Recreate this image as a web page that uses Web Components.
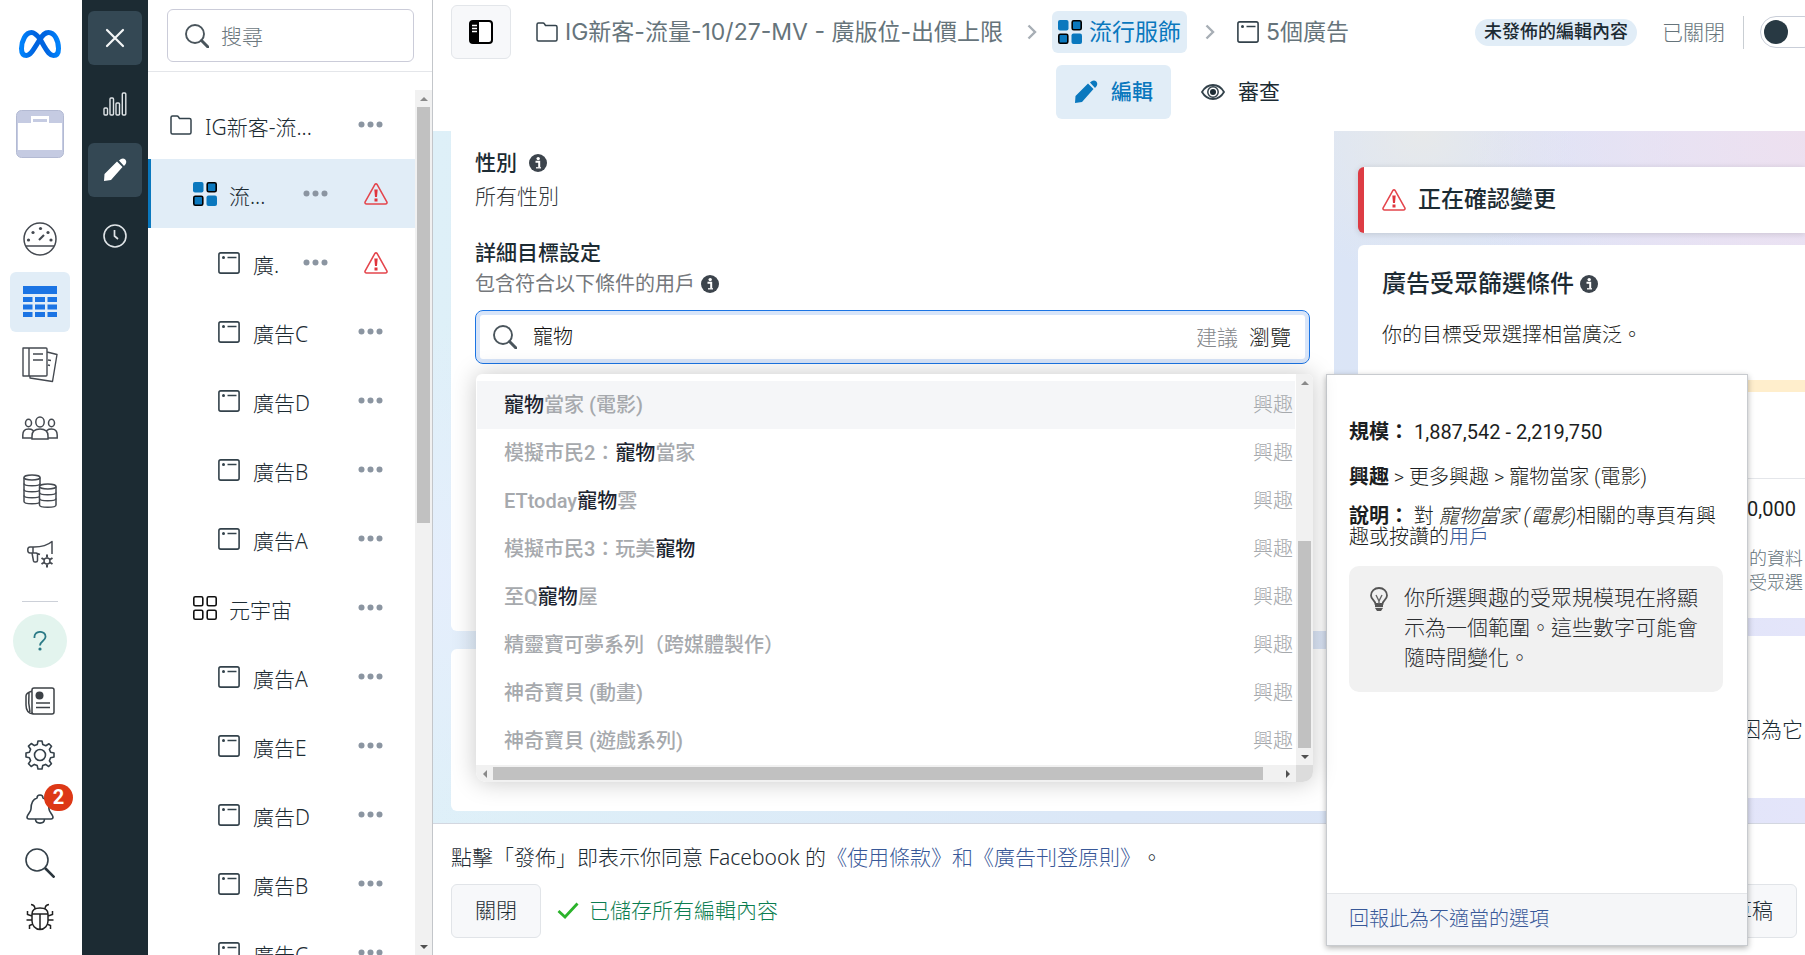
<!DOCTYPE html>
<html lang="zh-Hant">
<head>
<meta charset="utf-8">
<meta name="viewport" content="width=device-width, initial-scale=1">
<title>廣告管理員</title>
<style>
html, body { margin: 0; height: 100%; }
body {
  --ink: #1c2b33; --muted: #67747a; --blue: #0a78be; --tint: #e1edf7; --link: #385898; --red: #dd3c44; --line: #dfe1e5;
  --roboto: Roboto, "Noto Sans CJK TC", sans-serif;
  --segoe: "Noto Sans", "Noto Sans CJK TC", sans-serif;
  font: 300 20px/30px var(--segoe); color: var(--ink); background: #fff; overflow: hidden;
  text-spacing-trim: space-all;
}
</style>
</head>
<body>
<ads-editor></ads-editor>
<script>
const BASE = `*{box-sizing:border-box}:host([hidden]){display:none}
button{font:inherit;color:inherit;border:0;background:none;padding:0;margin:0;display:flex;align-items:center;justify-content:center;cursor:pointer}
a{color:var(--link);text-decoration:none}input{font:inherit;color:inherit;border:0;outline:0;background:none;padding:0;min-width:0}p,h2,h3,ul{margin:0;padding:0;font:inherit;list-style:none}`;

function define(name, css, html) {
  customElements.define(name, class extends HTMLElement {
    constructor() {
      super();
      this.attachShadow({ mode: 'open' });
    }
    connectedCallback() {
      const body = typeof html === 'function' ? html(this) : html;
      this.shadowRoot.innerHTML = `<style>${BASE}${css}</style>${body}`;
    }
  });
}

/* name: [width, height, markup] */
const ICONS = {
  logo: [42, 28, `<defs><linearGradient id="m" x1="0" x2="1"><stop offset="0" stop-color="#0082fb"/><stop offset=".35" stop-color="#0064e0"/><stop offset=".65" stop-color="#0064e0"/><stop offset="1" stop-color="#0082fb"/></linearGradient></defs><path d="M21 9C18 5 15.500 2.500 12.500 2.500 6.500 2.500 2.500 11 2.500 18.500c0 4.500 1.800 7 5 7 3.500 0 6-4 13-15.500C24 4.500 26 2.500 29.500 2.500c6 0 10 8 10 16 0 4.500-1.800 7-5 7-3.500 0-6-3.500-9.500-9.500z" fill="none" stroke="url(#m)" stroke-width="5"/>`],
  account: [48, 48, `<rect x=".5" y=".5" width="47" height="47" rx="5" fill="#c5cbe2" stroke="#b3bad3"/><path d="M2 13h13V6h18v7h13v27H2z" fill="#fff"/><path d="M17 9h14v3H17z" fill="#c5cbe2"/>`],
  gauge: [34, 34, `<g fill="none" stroke="#444950" stroke-width="1.500"><circle cx="17" cy="17" r="16"/><path d="M3 24h28"/><path d="M16 18l5-5" stroke-width="2.200"/></g><g fill="#444950"><circle cx="5.500" cy="18" r="1.600"/><circle cx="10" cy="10.500" r="1.600"/><circle cx="17.500" cy="6.500" r="1.600"/><circle cx="25" cy="10.500" r="1.600"/><circle cx="28" cy="18" r="1.600"/></g>`],
  grid: [34, 32, `<path fill="#1b74e4" d="M0 0h34v8H0zM0 11h9.500v5H0zM12 11h10v5H12zM24.500 11H34v5h-9.500zM0 18.500h9.500v5H0zM12 18.500h10v5H12zM24.500 18.500H34v5h-9.500zM0 26h9.500v5H0zM12 26h10v5H12zM24.500 26H34v5h-9.500z"/>`],
  books: [36, 36, `<g fill="none" stroke="#444950" stroke-width="1.400" stroke-linejoin="round"><path d="M1 1h23q1 0 1 1v26q0 1-1 1H1zM7 1v28M11 7h10M11 13h10M25 5l10 2.500-4.500 27L8 31v-2M26 13l3 .5M26 18l2 .5"/></g>`],
  people: [36, 24, `<g fill="#fff" stroke="#444950" stroke-width="1.500"><ellipse cx="6.500" cy="7" rx="3" ry="3.700"/><ellipse cx="29.500" cy="7" rx="3" ry="3.700"/><path d="M.8 22v-3q0-6 5.700-6t5.700 5v4zM35.200 22v-3q0-6-5.700-6t-5.700 5v4z"/><ellipse cx="18" cy="6" rx="4.200" ry="5"/><path d="M10 23v-3q0-7 8-7t8 7v3z"/></g>`],
  coins: [34, 34, `<g fill="#fff" stroke="#444950" stroke-width="1.500"><path d="M1 3.500v24c0 3 16 3 16 0v-24"/><ellipse cx="9" cy="3.500" rx="8" ry="2.500"/><path fill="none" d="M1 9.500c0 3 16 3 16 0M1 15.500c0 3 16 3 16 0M1 21.500c0 3 16 3 16 0"/><path d="M16.500 12.500V31c0 3 16.500 3 16.500 0V12.500"/><ellipse cx="24.800" cy="12.500" rx="8.200" ry="2.500"/><path fill="none" d="M16.500 18.500c0 3 16.500 3 16.500 0M16.500 24.500c0 3 16.500 3 16.500 0"/></g>`],
  megaphone: [28, 28, `<g fill="none" stroke="#444950" stroke-width="1.500" stroke-linejoin="round"><path d="M14 14.500L10 13H4C1 13 1 7 4 7h4C16 7 22 5 26 1.500V14M7 7v6M6 13l1.500 8c.5 1.500 4 1.500 4-.5V14"/><circle cx="21" cy="21" r="3"/><path d="M21 14.500v3M21 24.500v3M15.500 18l2.500 1.500M24 22.500l2.500 1.500M26.500 18L24 19.500M18 22.500L15.500 24" stroke-width="2"/></g>`],
  help: [14, 20, `<path d="M1.500 7C.5-1 13-1 12.500 6 12.300 10 7 10 7 14.500" fill="none" stroke="#2b7a86" stroke-width="1.800"/><circle cx="7" cy="18" r="1.600" fill="#2b7a86"/>`],
  news: [30, 28, `<g fill="none" stroke="#3c4146" stroke-width="1.500"><path d="M7 3Q7 1 9 1h18q2 0 2 2v22q0 2-2 2H8Q1 26 1 18V9q0-3 6-5zM7 3v22q0 2 2 2M4 6q-1 10 1 19M11 16h14M11 20.500h14"/></g><circle cx="14.500" cy="8.500" r="4" fill="#3c4146"/>`],
  gear: [30, 30, `<g fill="none" stroke="#344049" stroke-width="1.600" stroke-linejoin="round"><path d="M13 1h4l.8 3.600 3 1.200L24 3.800 26.500 6.300 24.400 9.400l1.200 2.900L29 13v4l-3.400.8-1.200 2.900 2 3.100L23.700 26.500l-3.100-2.100-2.900 1.200L17 29h-4l-.8-3.400-2.900-1.200-3.100 2.100L3.500 23.700l2.100-3.100-1.200-2.900L1 17v-4l3.400-.8 1.200-2.900-2.100-3.100L6.300 3.500l3.100 2.100 2.900-1.200z"/><circle cx="15" cy="15" r="5.500"/></g>`],
  bell: [28, 30, `<g fill="none" stroke="#344049" stroke-width="1.600" stroke-linejoin="round"><path d="M11 4c0-4 6-4 6 0 5 1.500 6 6 6 11 0 3 4 6 4 8 0 1-.5 2-2 2H3c-1.500 0-2-1-2-2 0-2 4-5 4-8 0-5 1-9.500 6-11zM9.500 25c0 5.500 9 5.500 9 0"/></g>`],
  find: [30, 30, `<circle cx="12" cy="12" r="11" fill="none" stroke="#344049" stroke-width="1.600"/><path d="M20 20l9.500 9.500" stroke="#2a353d" stroke-width="2.600"/>`],
  bug: [28, 28, `<g fill="none" stroke="#222" stroke-width="1.500"><path d="M6 11q0-6 8-6t8 6v7c0 4-3 8.500-8 8.500S6 22 6 18zM6 11h16M14 11v15M9 6Q9 2 5 1.500M19 6q0-4 4-4.500M6 13L1.500 11.500 1.500 8M22 13l4.500-1.500V8M6 17H.5M22 17h5.500M7 21l-3.500 1.500V26M21 21l3.500 1.500V26"/></g>`],
  close: [20, 20, `<path d="M2 2l16 16M18 2L2 18" stroke="#f4f6f7" stroke-width="2.200" stroke-linecap="round"/>`],
  chart: [24, 24, `<g fill="none" stroke="#dfe4e7" stroke-width="1.400"><rect x="1" y="16" width="3.500" height="7" rx="1"/><rect x="7" y="6" width="3.500" height="17" rx="1"/><rect x="13" y="11" width="3.500" height="12" rx="1"/><rect x="19.300" y="1" width="3.500" height="22" rx="1"/></g>`],
  pencil: [24, 24, `<path d="M1 23l.5-7L14 3.500l5.500 5.500L8 22zM16 2.500Q19.500-.8 22.300 1.500 24.800 4.500 21 8z" fill="currentColor"/>`],
  clock: [24, 24, `<circle cx="12" cy="12" r="11" fill="none" stroke="#dfe4e7" stroke-width="1.600"/><path d="M11.500 6v6l3.500 3" fill="none" stroke="#dfe4e7" stroke-width="1.700"/>`],
  glass: [24, 24, `<circle cx="10" cy="10" r="9" fill="none" stroke="#4a555c" stroke-width="1.900"/><path d="M16.500 16.500L23 23" stroke="#4a555c" stroke-width="3" stroke-linecap="round"/>`],
  folder: [22, 20, `<path d="M1 17.500v-15Q1 1 2.500 1H7q1 0 1.500 1l1 1.500H19.500Q21 3.500 21 5v12.500Q21 19 19.500 19h-17Q1 19 1 17.500z" fill="none" stroke="#33424b" stroke-width="1.500"/>`],
  sets: [24, 24, `<rect width="10.500" height="10.500" rx="2" fill="#0a78be"/><rect x="14.200" y=".8" width="9" height="9" rx="1.500" fill="#0a78be" stroke="#000" stroke-width="1.600"/><rect x=".8" y="14.200" width="9" height="9" rx="1.500" fill="#0a78be" stroke="#000" stroke-width="1.600"/><rect x="13.500" y="13.500" width="10.500" height="10.500" rx="2" fill="#0a78be"/>`],
  setsoff: [24, 24, `<g fill="none" stroke="#111" stroke-width="1.600"><rect x=".8" y=".8" width="9" height="9" rx="1.500"/><rect x="14.200" y=".8" width="9" height="9" rx="1.500"/><rect x=".8" y="14.200" width="9" height="9" rx="1.500"/><rect x="14.200" y="14.200" width="9" height="9" rx="1.500"/></g>`],
  ad: [22, 22, `<rect x=".9" y=".9" width="20.200" height="20.200" rx="1.800" fill="none" stroke="#33424b" stroke-width="1.600"/><circle cx="5.500" cy="5.500" r="1.500" fill="#33424b"/><path d="M9.500 5.500h9" stroke="#33424b" stroke-width="1.500"/>`],
  dots: [25, 7, `<g fill="#8b95a1"><circle cx="3.500" cy="3.500" r="3"/><circle cx="12.500" cy="3.500" r="3"/><circle cx="21.500" cy="3.500" r="3"/></g>`],
  warn: [24, 22, `<path d="M10.800 1.600Q12 .2 13.200 1.600L23 19.200Q23.200 21 21.500 21h-19Q.8 21 1 19.200z" fill="none" stroke="#e4454c" stroke-width="1.600"/><path d="M10.300 6.500h3.400l-.7 7.500h-2zM10.500 15.500h3v3h-3z" fill="#e0353d"/>`],
  panel: [24, 24, `<rect x="1" y="1" width="22" height="22" rx="3" fill="#fff" stroke="#000" stroke-width="2"/><path d="M2 1h8v22H2z" fill="#000"/><path d="M3 5.500h5M3 8.500h5M3 11.500h5" stroke="#fff" stroke-width="1.300"/>`],
  chevron: [10, 16, `<path d="M1.500 1.500L8 8l-6.500 6.500" fill="none" stroke="#a7aeb5" stroke-width="2.400"/>`],
  eye: [24, 16, `<path d="M1 8Q5 1 12 1t11 7q-4 7-11 7T1 8z" fill="none" stroke="#33424b" stroke-width="1.800"/><circle cx="12" cy="8" r="5.200" fill="none" stroke="#33424b" stroke-width="1.500"/><circle cx="12" cy="8" r="3" fill="#1c2b33"/>`],
  info: [18, 18, `<circle cx="9" cy="9" r="9" fill="#3c444c"/><circle cx="9.200" cy="4.600" r="1.700" fill="#fff"/><path d="M6.500 7.800h3.700V13.500" fill="none" stroke="#fff" stroke-width="2"/><path d="M7 13.800h5" stroke="#fff" stroke-width="1.300"/>`],
  check: [22, 17, `<path d="M1.500 9l6.500 6L20.500 1.500" fill="none" stroke="#2bb32b" stroke-width="2.800"/>`],
  bulb: [18, 24, `<path d="M5.500 17C5 13 1 12.500 1 8.500 1 4 4.500 1 9 1s8 3 8 7.500c0 4-4 4.500-4.500 8.500z" fill="none" stroke="#555" stroke-width="1.800"/><path d="M6 8l3 6 3-6M9 14v3" fill="none" stroke="#666" stroke-width="1.400"/><path d="M5 18h8v3l-2 3H7l-2-3z" fill="#555"/><path d="M5 20.500h8" stroke="#ddd" stroke-width="1"/>`],
};
define('ui-icon', ':host{display:inline-flex;flex:none}svg{display:block}', el => {
  const [w, h, body] = ICONS[el.getAttribute('name')];
  return `<svg width="${w}" height="${h}" viewBox="0 0 ${w} ${h}" aria-hidden="true">${body}</svg>`;
});

/* Scroll track with arrow ends; start and size are percentages of the track. */
define('scroll-track', `
:host{display:flex;flex-direction:column;width:17px;background:#f1f1f1}
:host([row]){flex-direction:row;width:auto;height:17px}
i{flex:none;width:17px;height:17px;display:flex;align-items:center;justify-content:center}
i::before{content:"";border:4px solid transparent}
.a::before{border-top:0;border-bottom:4px solid #8a8a8a}.b::before{border-bottom:0;border-top:4px solid #505050}
:host([row]) .a::before{border:4px solid transparent;border-left:0;border-right:4px solid #8a8a8a}
:host([row]) .b::before{border:4px solid transparent;border-right:0;border-left:4px solid #505050}
.t{flex:1;display:flex;flex-direction:inherit}
.t b{background:#c1c1c1;margin:0 2px}:host([row]) .t b{margin:2px 0}`, el => {
  const s = +el.getAttribute('start'), z = +el.getAttribute('size');
  return `<i class="a"></i><div class="t"><span style="flex:${s}"></span><b style="flex:${z}"></b><span style="flex:${100 - s - z}"></span></div><i class="b"></i>`;
});

define('global-nav', `
:host{display:flex;flex-direction:column;align-items:center;width:82px;padding:20px 2px 0 0;flex:none}
nav{display:contents}
button{flex:none}
.logo{width:60px;height:48px}.account{margin:42px 0 51px;height:48px}
.main{display:grid;gap:3px}.main button{width:60px;height:60px;border-radius:6px}.main .on{background:var(--tint)}
hr{width:36px;height:1px;border:0;background:#ccd0d8;margin:17px 0 12px}
.help{width:54px;height:54px;border-radius:50%;background:#e3f4ee;margin-bottom:6px}
.tools button{width:60px;height:54px;position:relative}
.badge{position:absolute;left:34px;top:2px;width:29px;height:27px;border-radius:14px;background:#dd3816;color:#fff;font:700 20px/26px var(--roboto)}`, `
<nav aria-label="主選單">
<button class="logo" aria-label="Meta"><ui-icon name="logo"></ui-icon></button>
<button class="account" aria-label="帳號"><ui-icon name="account"></ui-icon></button>
<div class="main">
<button aria-label="總覽"><ui-icon name="gauge"></ui-icon></button>
<button class="on" aria-label="廣告活動"><ui-icon name="grid"></ui-icon></button>
<button aria-label="報告"><ui-icon name="books"></ui-icon></button>
<button aria-label="受眾"><ui-icon name="people"></ui-icon></button>
<button aria-label="帳單"><ui-icon name="coins"></ui-icon></button>
<button aria-label="設定廣告"><ui-icon name="megaphone"></ui-icon></button>
</div>
<hr>
<button class="help" aria-label="說明"><ui-icon name="help"></ui-icon></button>
<div class="tools">
<button aria-label="消息"><ui-icon name="news"></ui-icon></button>
<button aria-label="設定"><ui-icon name="gear"></ui-icon></button>
<button aria-label="通知"><ui-icon name="bell"></ui-icon><span class="badge">2</span></button>
<button aria-label="搜尋"><ui-icon name="find"></ui-icon></button>
<button aria-label="回報錯誤"><ui-icon name="bug"></ui-icon></button>
</div>
</nav>`);

define('mode-rail', `
:host{display:flex;flex-direction:column;align-items:center;gap:12px;width:66px;flex:none;background:#1c2b33;padding-top:11px;color:#fff}
button{width:54px;height:54px;border-radius:6px}.on{background:#344854}`, `
<button class="on" aria-label="關閉"><ui-icon name="close"></ui-icon></button>
<button aria-label="圖表"><ui-icon name="chart"></ui-icon></button>
<button class="on" aria-label="編輯"><ui-icon name="pencil"></ui-icon></button>
<button aria-label="紀錄"><ui-icon name="clock"></ui-icon></button>`);

define('tree-row', `
:host{display:flex;align-items:center;height:69px;padding:0 32px 0 22px;flex:none;font-size:21px}
:host([level="1"]){padding-left:45px}:host([level="2"]){padding-left:70px}
:host([warn]){padding-right:27px}
:host([on]){background:var(--tint);box-shadow:inset 3px 0 var(--blue)}
.name{flex:1;margin-left:13px;padding-top:4px;white-space:nowrap}
:host([level="1"]) .name{margin-left:12px}
.warn{margin-left:36px}`, el => `
<ui-icon name="${el.getAttribute('icon')}"></ui-icon><span class="name"><slot></slot></span>
<button aria-label="更多"><ui-icon name="dots"></ui-icon></button>${el.hasAttribute('warn') ? '<ui-icon class="warn" name="warn"></ui-icon>' : ''}`);

define('campaign-tree', `
:host{display:flex;flex-direction:column;width:285px;flex:none;border-right:1px solid #c3c6ca;min-height:0}
.top{padding:9px 18px 9px 19px;border-bottom:1px solid #e4e6ea;margin-bottom:18px}
.top label{display:flex;align-items:center;gap:12px;height:53px;border:1px solid #cbccd9;border-radius:6px;padding:0 17px;font-size:21px}
input{flex:1}input::placeholder{color:#6d787e;opacity:1}
.body{flex:1;display:flex;min-height:0;overflow:hidden}
.rows{flex:1;display:flex;flex-direction:column;min-width:0}`, `
<div class="top"><label><ui-icon name="glass"></ui-icon><input type="search" placeholder="搜尋" aria-label="搜尋"></label></div>
<div class="body"><div class="rows">
<tree-row level="0" icon="folder">IG新客-流...</tree-row>
<tree-row level="1" icon="sets" on warn>流...</tree-row>
<tree-row level="2" icon="ad" warn>廣.</tree-row>
<tree-row level="2" icon="ad">廣告C</tree-row>
<tree-row level="2" icon="ad">廣告D</tree-row>
<tree-row level="2" icon="ad">廣告B</tree-row>
<tree-row level="2" icon="ad">廣告A</tree-row>
<tree-row level="1" icon="setsoff">元宇宙</tree-row>
<tree-row level="2" icon="ad">廣告A</tree-row>
<tree-row level="2" icon="ad">廣告E</tree-row>
<tree-row level="2" icon="ad">廣告D</tree-row>
<tree-row level="2" icon="ad">廣告B</tree-row>
<tree-row level="2" icon="ad">廣告C</tree-row>
</div><scroll-track start="0" size="50"></scroll-track></div>`);

define('editor-header', `
:host{display:block;height:131px;padding:5px 0 0 18px;flex:none;font:400 23px/34px Inter,"Noto Sans CJK TC",sans-serif;color:#66747b;overflow:hidden;white-space:nowrap}
.crumbs{display:flex;align-items:center;height:54px}
.side{width:60px;height:54px;border:1px solid #e3e6ea;border-radius:6px;background:#f7f8fa;margin-right:25px;flex:none}
.crumbs a{display:flex;align-items:center;gap:7px;color:inherit;flex:none}
.sep{margin:0 15px 0 24px}
.crumbs .chip{background:var(--tint);border-radius:6px;height:42px;padding:0 6px;color:var(--blue)}
.chip + .sep{margin:0 22px 0 18px}
.space{flex:1}
.pill{background:var(--tint);border-radius:14px;height:27px;padding:0 9px;font:500 18px/26px var(--roboto);color:var(--ink);margin-right:25px;flex:none}
.state{font-size:21px;font-weight:300;padding-right:18px;border-right:1px solid #c9ced3;line-height:33px;flex:none}
.switch{position:relative;width:45px;height:32px;margin-left:16px;flex:none}
.switch input{appearance:none;display:flex;align-items:center;width:60px;height:32px;margin:0;padding:0 3px;border:1px solid #c9ced8;border-radius:16px}
.switch input::before{content:"";width:24px;height:24px;border-radius:50%;background:#283943}
.tabs{display:flex;justify-content:center;gap:12px;margin:6px 0 0 98px;font-size:21px}
.tabs button{height:54px;border-radius:6px;padding:0 18px;gap:13px;color:var(--ink)}
.tabs .on{background:var(--tint);color:var(--blue);font-weight:500}`, `
<div class="crumbs">
<button class="side" aria-label="側邊欄"><ui-icon name="panel"></ui-icon></button>
<a href="#campaign"><ui-icon name="folder"></ui-icon><span>IG新客-流量-10/27-MV - 廣版位-出價上限</span></a>
<ui-icon class="sep" name="chevron"></ui-icon>
<a class="chip" href="#set"><ui-icon name="sets"></ui-icon><span>流行服飾</span></a>
<ui-icon class="sep" name="chevron"></ui-icon>
<a href="#ads"><ui-icon name="ad"></ui-icon><span>5個廣告</span></a>
<span class="space"></span>
<span class="pill">未發佈的編輯內容</span><span class="state">已關閉</span>
<label class="switch"><input type="checkbox" role="switch" aria-label="開關"></label>
</div>
<div class="tabs"><button class="on"><ui-icon name="pencil"></ui-icon><span>編輯</span></button><button><ui-icon name="eye"></ui-icon><span>審查</span></button></div>`);

define('interest-option', `
:host{display:flex;align-items:center;justify-content:space-between;height:48px;padding:0 2px 0 27px;font:500 20px/30px var(--roboto);color:#a6a9ad}
:host([on]){background:#f5f6f8}
.kind{font-weight:300}`, '<span><slot></slot></span><span class="kind">興趣</span>');

define('interest-list', `
:host{display:grid;grid-template-columns:minmax(0,1fr) 17px;background:#fff;border-radius:6px 6px 10px 10px;overflow:hidden;box-shadow:0 0 24px rgba(0,0,0,.22)}
.rows{padding:7px 1px 0 1px}b{font-weight:500;color:#1c2430}.corner{background:#dcdcdc}`, `
<div class="rows" role="listbox">
<interest-option on><b>寵物</b>當家 (電影)</interest-option>
<interest-option>模擬市民2：<b>寵物</b>當家</interest-option>
<interest-option>ETtoday<b>寵物</b>雲</interest-option>
<interest-option>模擬市民3：玩美<b>寵物</b></interest-option>
<interest-option>至Q<b>寵物</b>屋</interest-option>
<interest-option>精靈寶可夢系列（跨媒體製作）</interest-option>
<interest-option>神奇寶貝 (動畫)</interest-option>
<interest-option>神奇寶貝 (遊戲系列)</interest-option>
</div>
<scroll-track start="42" size="58"></scroll-track>
<scroll-track row start="0" size="98"></scroll-track><span class="corner"></span>`);

define('targeting-card', `
:host{display:block;height:500px;padding:17px 24px 0 24px;background:#fff;border-radius:0 0 6px 6px;flex:none}
h3{display:flex;align-items:center;gap:12px;font:500 21px/30px var(--roboto)}
.value{font-size:21px;line-height:30px;color:#33373b;margin:3px 0 27px}
.hint{display:flex;align-items:center;gap:6px;font:400 20px/24px var(--roboto);color:#75787c;margin:4px 0 14px}
.field{position:relative;z-index:2}
.box{display:flex;align-items:center;height:54px;border:1px solid #1b74e4;border-radius:8px;box-shadow:inset 0 0 0 4px #d8e5f9;padding:0 18px 0 17px;color:#111}
.box input{flex:1;margin-left:16px}
.box button{font-size:21px;margin-left:11px;color:#1c1e21}.box .off{color:#85888c}
interest-list{position:absolute;left:1px;right:-3px;top:64px}`, `
<h3>性別 <ui-icon name="info"></ui-icon></h3><p class="value">所有性別</p>
<h3><label for="q">詳細目標設定</label></h3><p class="hint">包含符合以下條件的用戶 <ui-icon name="info"></ui-icon></p>
<div class="field"><div class="box"><ui-icon name="glass"></ui-icon><input id="q" value="寵物"><button class="off">建議</button><button>瀏覽</button></div>
<interest-list></interest-list></div>`);

define('status-alert', `
:host{display:flex;align-items:center;gap:12px;height:66px;padding-left:18px;background:#fff;border-left:6px solid var(--red);border-radius:6px 0 0 6px;box-shadow:0 1px 6px rgba(0,0,0,.14);font:500 23px/34px var(--roboto);flex:none}`,
'<ui-icon name="warn"></ui-icon><span><slot></slot></span>');

define('audience-card', `
:host{display:flex;flex-direction:column;height:373px;padding-top:21px;background:#fff;border-radius:6px 0 0 0;flex:none}
h2{display:flex;align-items:center;gap:6px;font:500 24px/36px var(--roboto);padding-left:24px}
.broad{padding:18px 24px 0;line-height:30px;font-size:20px;color:#1c1e21}
.bar{height:12px;margin-top:30px;background:#ffeecc}
.size{margin-top:86px;border-top:1px solid #e4e6ea;padding:14px 9px 0 0;text-align:right;font:400 20px/32px var(--roboto);color:#1c1e21}
.note{padding:21px 2px 0 0;text-align:right;font-size:18px;line-height:24px;color:#65737b}`, `
<h2>廣告受眾篩選條件 <ui-icon name="info"></ui-icon></h2><p class="broad">你的目標受眾選擇相當廣泛。</p>
<div class="bar"></div><p class="size">0,000</p><p class="note">的資料<br>受眾選</p>`);

define('result-card', `
:host{display:block;height:162px;padding:78px 2px 0 0;background:#fff;text-align:right;font-size:21px;line-height:30px;flex:none}`, '<slot></slot>');

define('editor-footer', `
:host{display:block;height:132px;flex:none;padding:18px 8px 0 18px;border-top:1px solid #d3d7e0;background:#fff;font-size:21px}
p{line-height:30px;padding-bottom:12px}
.row{display:flex;align-items:center}
button{height:54px;padding:0 23px 2px;border:1px solid #e1e4e8;border-radius:6px;background:#f7f8fa}
.saved{display:flex;align-items:center;gap:10px;margin-left:16px;padding-bottom:2px;flex:1;color:#0b7d50}`, `
<p>點擊「發佈」即表示你同意 Facebook 的<a href="#terms">《使用條款》和《廣告刊登原則》</a>。</p>
<div class="row"><button>關閉</button><span class="saved"><ui-icon name="check"></ui-icon><span>已儲存所有編輯內容</span></span><button>草稿</button></div>`);

define('interest-details', `
:host{display:flex;flex-direction:column;width:422px;background:#fff;border:1px solid #c8cbcf;box-shadow:0 2px 6px rgba(0,0,0,.3);font:300 20px/30px var(--roboto);color:#1c1e21}
.body{flex:1;padding:42px 24px 0 22px}
b{font-weight:700}
.size{font-weight:400}
.path{margin:15px 0 14px}.desc{line-height:21px}
.tip{display:flex;gap:16px;margin-top:18px;padding:17px 23px 19px 21px;border-radius:10px;background:#f1f1f1;font-size:21px;color:#2c2e31}
.tip ui-icon{margin-top:4px}
.foot{border-top:1px solid #e4e6e9;background:#f5f6f8;padding:10px 22px 11px}`, `
<div class="body"><p class="size"><b>規模：</b> 1,887,542 - 2,219,750</p>
<p class="path"><b>興趣</b> &gt; 更多興趣 &gt; 寵物當家 (電影)</p>
<p class="desc"><b>說明：</b> 對 <i>寵物當家 (電影)</i>相關的專頁有興趣或按讚的<a href="#people">用戶</a></p>
<div class="tip"><ui-icon name="bulb"></ui-icon><span>你所選興趣的受眾規模現在將顯示為一個範圍。這些數字可能會隨時間變化。</span></div></div>
<div class="foot"><a href="#report">回報此為不適當的選項</a></div>`);

define('ads-editor', `
:host{display:flex;height:100vh;min-height:0;overflow:hidden}
main{flex:1;display:flex;flex-direction:column;min-width:0;position:relative}
.content{flex:1;display:flex;gap:24px;min-height:0;overflow:hidden;padding-left:18px;
background:radial-gradient(circle at 100% 0,#ede0ef 0,rgba(237,224,239,0) 340px),radial-gradient(circle at 72% 0,#e7e9ea 0,rgba(231,233,234,0) 150px),radial-gradient(circle at 0 65%,#e5eefc 0,rgba(229,238,252,0) 260px),linear-gradient(90deg,#def0f8 0,#dbe7f7 50%,#dbe4f6 75%,#e4e5fa 100%)}
.edit{flex:1;min-width:0;display:flex;flex-direction:column;gap:18px}
.blank{height:162px;background:#fff;border-radius:6px;flex:none}
.side{flex:0 0 447px;display:flex;flex-direction:column;padding-top:36px}
audience-card{margin:12px 0 18px}
interest-details{position:absolute;right:57px;top:374px;bottom:9px}`, `
<global-nav></global-nav><mode-rail></mode-rail><campaign-tree></campaign-tree>
<main><editor-header></editor-header>
<div class="content"><div class="edit"><targeting-card></targeting-card><div class="blank"></div></div>
<div class="side"><status-alert>正在確認變更</status-alert><audience-card></audience-card><result-card>因為它</result-card></div></div>
<editor-footer></editor-footer><interest-details></interest-details></main>`);
</script>
</body>
</html>
